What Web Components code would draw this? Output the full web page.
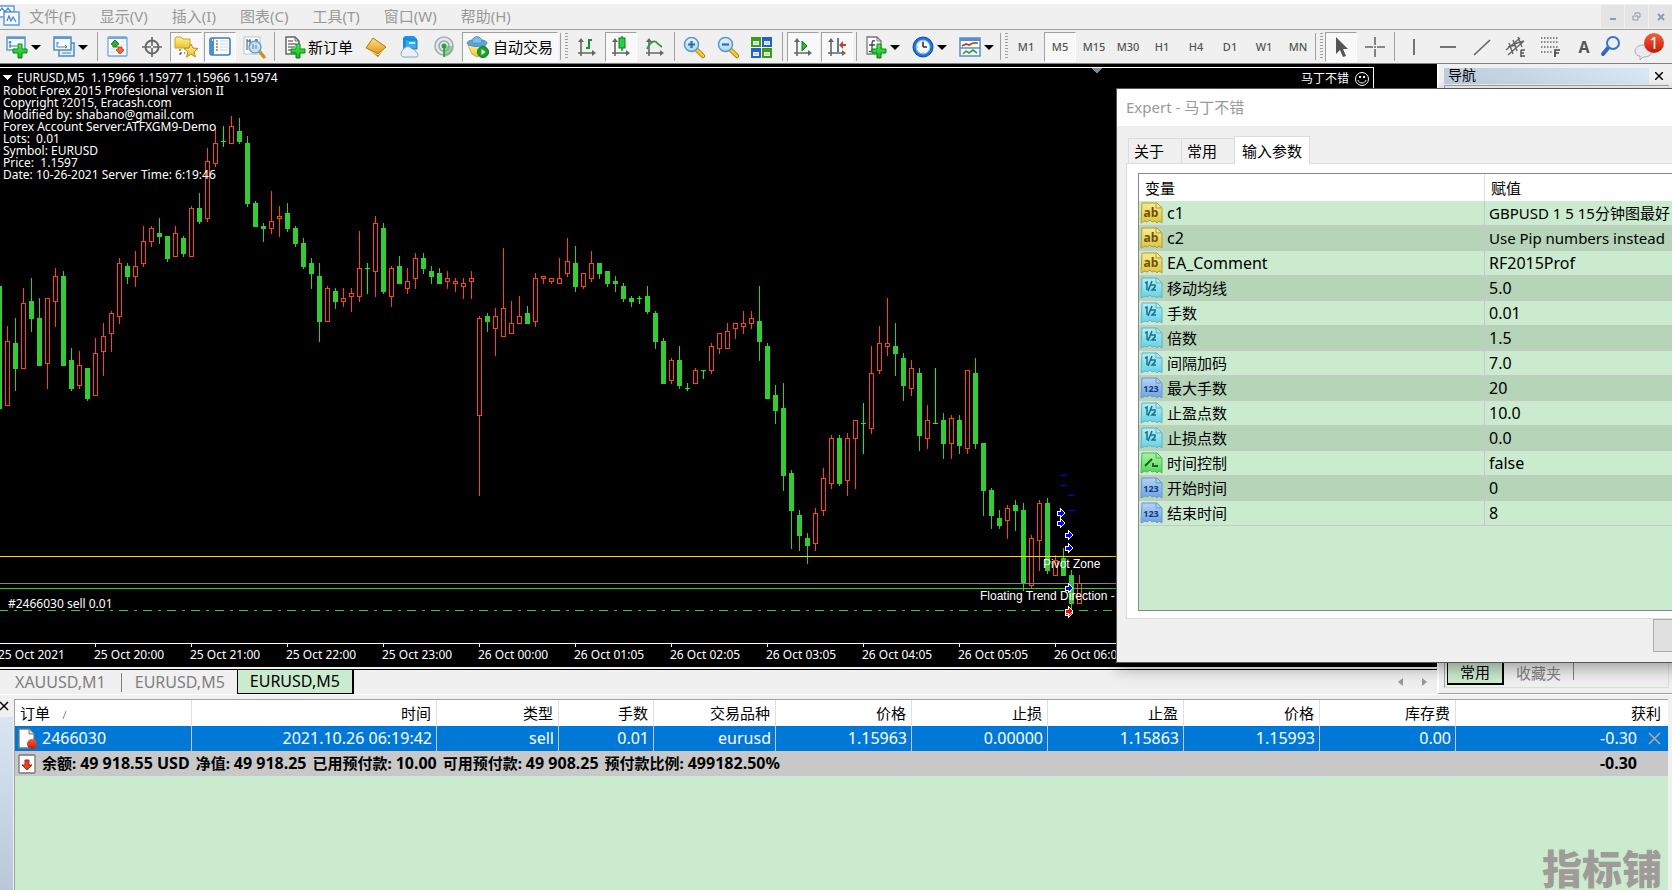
<!DOCTYPE html>
<html lang="zh-CN">
<head>
<meta charset="utf-8">
<title>EURUSD,M5</title>
<style>
html, body { margin: 0; height: 100%; overflow: hidden; }
body { background: #f0f0f0; color: #000; font: 15px/20px "Noto Sans", "Noto Sans CJK SC", sans-serif; }
</style>
</head>
<body>
<mt-terminal-app></mt-terminal-app>

<script>
const define = (name, html, setup) => {
  const template = document.createElement('template');
  template.innerHTML = html;
  customElements.define(name, class extends HTMLElement {
    constructor() {
      super();
      this.attachShadow({ mode: 'open' }).append(template.content.cloneNode(true));
    }
    connectedCallback() {
      if (setup && !this.ready) { this.ready = true; setup(this, this.shadowRoot); }
    }
  });
};

/* ---------- icons ---------- */
const AXES = '<path d="M5 4v16M2 17h16" stroke="#666" stroke-width="1.600" fill="none"/><path d="M2 6l3-4 3 4zM16 14l4 3-4 3z" fill="#666"/>';
const PLUS = '<path d="M12 8h4v5h5v4h-5v5h-4v-5h-5v-4h5z" fill="url(#green)" stroke="#078a12"/>';
const TAG = (fill, edge, text) => `<path d="M1 1h15l5 5v15l-3-2-2 2-2-2-3 1-2-2-3 2-2-1-4 2z" fill="url(#${fill})" stroke="${edge}"/><path d="M15 1v5h5" fill="none" stroke="${edge}"/>${text}`;
const tagText = (s, c, size) => `<text x="10" y="15" text-anchor="middle" font-family="Open Sans,sans-serif" font-weight="700" font-size="${size}" fill="${c}">${s}</text>`;
const LENS = (sign) => `<path d="M13 13l7 7" stroke="#b07a00" stroke-width="4.5" stroke-linecap="round"/><path d="M13 13l7 7" stroke="#f5cf3d" stroke-width="2.5" stroke-linecap="round"/><circle cx="8.500" cy="8.500" r="7" fill="url(#sky)" stroke="#5a96d0" stroke-width="1.500"/><path d="${sign}" stroke="#2d6ea8" stroke-width="2.200"/>`;
const ICONS = {
  logo: '<g fill="#fff" stroke="#5b9bea" stroke-width="1.500"><path d="M-4 2h18v11H-4z"/><path d="M4 8h15v13H4z"/></g><path d="M0 7l2-3 3 4 3-4 3 4M7 17l2-5 2 5 2-4 3 5" fill="none" stroke="#3f84dd" stroke-width="1.300"/>',
  newchart: '<rect x="1" y="1" width="18" height="13" fill="#f3f8fd" stroke="#5d9ad1" stroke-width="1.500"/><path d="M1 1h18v2H1z" fill="#5d9ad1"/><path d="M4 12V6M3 10h8M3 7l1-2 1 2" stroke="#3c79b5" fill="none"/>' + PLUS,
  profiles: '<rect x="6" y="7" width="15" height="13" fill="#e3effb" stroke="#4d8ac8" stroke-width="1.500"/><rect x="1" y="1" width="17" height="13" fill="#f5faff" stroke="#4d8ac8" stroke-width="1.500"/><path d="M1 1h17v2H1z" fill="#5d9ad1"/><path d="M4 6v5h10M4 7h2M12 9l2 2-2 1M9 17h9" stroke="#5681ab" fill="none"/>',
  market: '<rect x="1" y="1" width="19" height="19" rx="1" fill="#fff" stroke="#6aa9de" stroke-width="1.300"/><path d="M1 1h19v2H1z" fill="#6aa9de"/><path d="M14 6h4M14 9h4M3 13h5M3 16h5" stroke="#c6daf2"/><path d="M8 4l4 4-2 1v2H6V9L4 8z" fill="#30b030" stroke="#108010"/><path d="M13 18l-4-4 2-1v-2h4v2l2 1z" fill="#f4683c" stroke="#cf3d10"/>',
  target: '<circle cx="11" cy="11" r="6.500" fill="none" stroke="#666" stroke-width="2"/><path d="M11 1v9M11 12v9M1 11h9M12 11h9" stroke="#666" stroke-width="1.600"/>',
  favorites: '<path d="M0 3l1-2h5l2 2h7v9H0z" fill="url(#gold)" stroke="#c8a51a"/><path d="M5 13v8M5 17h5" stroke="#333" stroke-dasharray="2 2" fill="none"/><path d="M16 8l2 4 5 .5-4 3.500 1.500 5-4.500-3-4.500 3 1.500-5-4-3.500 5-.5z" fill="url(#gold)" stroke="#c18b10"/>',
  list: '<rect x="1" y="2" width="20" height="17" rx="2" fill="#fff" stroke="#3b7dbc" stroke-width="1.600"/><path d="M1 2h4v17H1z" fill="#4b90cd"/><path d="M11 5h8M11 8h8M11 11h8M11 14h8" stroke="#c3d6ea"/><path d="M3 4h1" stroke="#fff" stroke-width="2"/><path d="M7 5h2" stroke="#d33"/><path d="M7 8h2M7 11h2M7 14h2" stroke="#444"/>',
  tester: '<rect x="1" y="1" width="16" height="17" fill="#fff" stroke="#b5c4d1"/><path d="M4 3v11M7 3v7M13 3v5M4 5h4M12 4h3" stroke="#57789a" stroke-width="1.300"/><path d="M17 16l4 5" stroke="#c79618" stroke-width="3.500" stroke-linecap="round"/><circle cx="12" cy="11" r="6" fill="#bddcf6" fill-opacity=".85" stroke="#6f9ec9" stroke-width="1.500"/><path d="M10 8v5M13 9v4" stroke="#57789a"/>',
  neworder: '<path d="M2 1h9l4 4v13H2z" fill="#fff" stroke="#666" stroke-width="1.500"/><path d="M11 1v4h4" fill="none" stroke="#666"/><path d="M4 5h5M4 8h8M4 11h7M4 14h4" stroke="#777" stroke-width="1.300"/>' + PLUS,
  gold: '<path d="M1 12L9 3l12 8-8 10z" fill="#a96f08"/><path d="M1 12L8 2l13 9-8 7z" fill="url(#goldbar)" stroke="#b27a0a"/><path d="M1 13l12 6 8-7" stroke="#fff3c0" fill="none"/>',
  cloud: '<path d="M4 2l2-2h9l3 3v10H4z" fill="#1595ec"/><path d="M6 2l3 2h9v9H6z" fill="#35abf5" stroke="#0b7ace"/><path d="M10 6h6v2h-6z" fill="#c9ebff"/><path d="M4 21a4 4 0 010-7 5 5 0 019-1 4 4 0 014 3 3 3 0 011 5z" fill="#e9f0f8" stroke="#8aa2bd"/>',
  signal: '<circle cx="11" cy="10" r="9" fill="#e6eaea" stroke="#a7b0b5" stroke-width="1.700"/><circle cx="11" cy="10" r="5" fill="none" stroke="#94aeb8" stroke-width="1.700"/><path d="M11 10v11c6-1 9-5 9-11z" fill="#65b574" fill-opacity=".55"/><path d="M11 11v10" stroke="#1d9b2a" stroke-width="1.600"/><circle cx="11" cy="10" r="2.500" fill="#2aa336"/>',
  auto: '<path d="M1 9h18l-2 8-7 4-5-3z" fill="url(#gold)" stroke="#d4af2a"/><ellipse cx="10" cy="7" rx="10" ry="3.500" fill="#5ba6da" stroke="#4690c4"/><path d="M5 6c0-7 10-7 10 0 0 2-10 2-10 0" fill="#7cc0ea" stroke="#4690c4"/><circle cx="16" cy="16" r="5.500" fill="#18a42a" stroke="#0b7a18"/><path d="M14.500 13l4 3-4 3z" fill="#fff"/>',
  bars: AXES + '<path d="M13 3v10M13 4h3M10 12h3" stroke="#12912a" stroke-width="2"/>',
  candles: AXES + '<path d="M12 0v15" stroke="#12912a" stroke-width="1.500"/><rect x="9" y="2" width="6" height="10" fill="#28d04a" stroke="#0b7a18"/>',
  line: AXES + '<path d="M3 13c4-8 8-10 11-5l4 3" stroke="#2c9a3c" stroke-width="1.700" fill="none"/>',
  zoomin: LENS('M8.500 5v7M5 8.500h7'),
  zoomout: LENS('M5 8.500h7'),
  tiles: '<path d="M0 1h10v10H0zM11 12h10v10H11z" fill="#3a9d13"/><path d="M11 1h10v10H11zM0 12h10v10H0z" fill="#245fdb"/><path d="M2 5h6v4H2zM13 5h6v4h-6zM2 16h6v4H2zM13 16h6v4h-6z" fill="#f1f8ee"/><path d="M3 7h4M14 7h4M3 18h4M14 18h4" stroke="#89c0a0"/>',
  scroll: AXES + '<path d="M10 5l5 5-5 5z" fill="#20c238" stroke="#087c18"/>',
  shift: AXES + '<path d="M12 2v14" stroke="#2a6aa8" stroke-width="1.700"/><path d="M13 9l4-4v3h3v2h-3v3z" fill="#c8431c"/>',
  indicator: '<path d="M2 1h10l4 4v13H2z" fill="#fff" stroke="#777" stroke-width="1.300"/><path d="M12 1v4h4" fill="none" stroke="#777"/><path d="M10 5c-3-1-3 1-3 4v5c0 2-2 2-3 1M4 9h6" stroke="#444" fill="none" stroke-width="1.300"/>' + PLUS,
  clock: '<circle cx="11" cy="11" r="10" fill="#1b74da" stroke="#0c4ba4"/><circle cx="11" cy="11" r="7" fill="#f5f9ff" stroke="#7ab0ea"/><path d="M11 11V6M11 11h4" stroke="#333" stroke-width="1.600"/><path d="M11 5v1M11 16v1M5 11h1" stroke="#888"/>',
  template: '<rect x="1" y="2" width="20" height="18" fill="#fff" stroke="#5290cd" stroke-width="1.500"/><path d="M1 2h20v3H1z" fill="#5290cd"/><path d="M1 12h20" stroke="#5290cd" stroke-width="1.500"/><path d="M3 10l4-2 3 1 4-2 5 0" stroke="#b53a24" fill="none" stroke-width="1.700"/><path d="M4 18l3-3 3 2 4-3 4 3" stroke="#33a045" fill="none" stroke-width="1.700"/>',
  cursor: '<path d="M6 1v17l4-4 3 7 3-1-3-7h5z" fill="#555"/>',
  cross: '<path d="M11 1v8M11 13v8M1 11h8M13 11h8M10 11h2" stroke="#666" stroke-width="1.600"/>',
  vline: '<path d="M11 3v16" stroke="#555" stroke-width="1.600"/>',
  hline: '<path d="M3 11h16" stroke="#555" stroke-width="1.600"/>',
  trend: '<path d="M3 19L19 4" stroke="#666" stroke-width="1.700"/>',
  channel: '<path d="M1 14L15 2M3 19L19 5M4 7l4 11M8 4l4 11M13 1l4 10M3 11l8-2M9 8l10-3" stroke="#666" stroke-width="1.400"/><path d="M16 14h4M16 17h3M16 20h4M16 14v7" stroke="#555" stroke-width="1.500"/>',
  fibo: '<path d="M2 2h18M2 6h18M2 11h18M2 16h12" stroke="#666" stroke-width="1.500" stroke-dasharray="1.500 1.500"/><path d="M16 21v-7h5M16 17h4" stroke="#444" stroke-width="1.700" fill="none"/>',
  text: '<text x="11" y="17" text-anchor="middle" font-family="Open Sans,sans-serif" font-weight="700" font-size="16" fill="#555">A</text>',
  search: '<path d="M8 12l-5 6" stroke="#3268c4" stroke-width="4" stroke-linecap="round"/><circle cx="13" cy="7" r="6" fill="#e6f1fd" stroke="#3a72cf" stroke-width="2"/>',
  chat: '<path d="M-3 15c0-8 17-8 17 0 0 5-5 6-9 6l-3 3v-4c-3 0-5-2-5-5" fill="#e8eaee" stroke="#aab"/><circle cx="16" cy="7" r="10" fill="url(#red)"/><text x="16" y="13" text-anchor="middle" font-family="Noto Sans,sans-serif" font-size="16" fill="#fff">1</text>',
  ab: TAG('tagy', '#b79c2c', tagText('ab', '#6b5206', 12)),
  half: TAG('tagc', '#5cb5c6', '<path d="M4 6l2-1v8M11 4L7 14" stroke="#17728a" stroke-width="1.500" fill="none"/><path d="M10 8h4v2l-3 3h4" stroke="#17728a" stroke-width="1.500" fill="none"/>'),
  int: TAG('tagb', '#6a98ce', tagText('123', '#123c78', 9)),
  bool: TAG('tagg', '#4bb556', '<path d="M4 14l7-7M12 11v3h5" stroke="#11631b" stroke-width="1.800" fill="none"/>'),
  order: '<path d="M1 1h10l5 5v14H1z" fill="#fff" stroke="#777" stroke-width="1.300"/><path d="M11 1v5h5" fill="#ddd" stroke="#777"/><circle cx="14" cy="16" r="5" fill="url(#red)"/>',
  balance: '<rect x="1" y="2" width="16" height="18" rx="1" fill="#fff" stroke="#777" stroke-width="1.300"/><path d="M9 17l-5-5h3V7h4v5h3z" fill="#e8401c" stroke="#a82a0c"/>',
};
const grad = (id, a, b) => `<linearGradient id="${id}" x1="0" y1="0" x2="0" y2="1"><stop stop-color="${a}"/><stop offset="1" stop-color="${b}"/></linearGradient>`;
const DEFS = '<defs>' + grad('green', '#4df04d', '#0cb41c') + grad('gold', '#fff19a', '#eac22e') + grad('goldbar', '#ffe08a', '#d99a18') +
  grad('sky', '#e9f6ff', '#a7d6f7') + grad('red', '#f2603c', '#c81808') + grad('tagy', '#f8eb96', '#ddc442') +
  grad('tagc', '#b6f0f8', '#66cfe4') + grad('tagb', '#b4d2f8', '#6ba3e6') + grad('tagg', '#a5f5a0', '#54d45c') + '</defs>';

define('mt-icon', `<style>:host{display:block;flex:none;width:22px;height:22px}svg{display:block;overflow:visible}</style>`,
  (el, root) => root.append(document.createRange().createContextualFragment(
    `<svg width="22" height="22" viewBox="0 0 22 22" aria-hidden="true">${DEFS}${ICONS[el.getAttribute('name')]}</svg>`)));

/* ---------- menu bar ---------- */
define('mt-menubar', `<style>
:host{display:flex;height:25px;border-top:4px solid #fff;border-bottom:1px solid #a0a0a0;background:#f0f0f0;color:#999}
nav{display:flex;flex:1}
nav button{font:inherit;color:inherit;border:0;background:none;padding:0 12px 2px}
.win{display:flex;gap:1px;padding-top:1px}
.win button{width:23px;height:23px;padding:0;border:0;background:#e4e4e4;display:grid;place-items:center}
mt-icon{width:17px}
</style>
<mt-icon name="logo"></mt-icon>
<nav aria-label="菜单"><button>文件(F)</button><button>显示(V)</button><button>插入(I)</button><button>图表(C)</button><button>工具(T)</button><button>窗口(W)</button><button>帮助(H)</button></nav>
<div class="win">
<button aria-label="最小化"><svg width="9" height="9"><path d="M2 7h6" stroke="#8b9cad" stroke-width="2"/></svg></button>
<button aria-label="还原"><svg width="9" height="9"><path d="M3 3V1h5v4H6M1 4h5v4H1z" fill="none" stroke="#8b9cad"/></svg></button>
<button aria-label="关闭"><svg width="9" height="9"><path d="M2 2l6 6M8 2L2 8" stroke="#8b9cad" stroke-width="2"/></svg></button>
</div>`);

/* ---------- tool bar ---------- */
define('mt-tool', `<style>
:host{display:block;flex:none;width:34px}
:host([menu]){width:47px}
:host([wide]){width:auto}
button{display:flex;align-items:center;justify-content:center;box-sizing:border-box;width:32px;height:30px;margin:2px 1px 1px;padding:0;border:1px solid transparent;background:none;font:inherit;color:inherit}
:host([menu]) button{width:45px;justify-content:flex-start;padding-left:4px;gap:3px}
:host([wide]) button{width:auto;padding:0 4px;gap:2px}
:host([wide][pressed]) button{gap:4px}
:host([pressed]) button{background:#f8f8f8;border-color:#a0a0a0 #fff #fff #a0a0a0}
i{display:none;border:5px solid transparent;border-top-color:#000;border-bottom:0}
:host([menu]) i{display:block}
</style><button><slot></slot><i></i></button>`, (el, root) => {
  const b = root.querySelector('button'), icon = el.getAttribute('icon');
  if (icon) { const g = document.createElement('mt-icon'); g.setAttribute('name', icon); b.prepend(g); }
  if (el.title) b.setAttribute('aria-label', el.title);
  if (el.hasAttribute('pressed')) b.setAttribute('aria-pressed', 'true');
});
define('mt-rule', `<style>:host{display:block;flex:none;width:1px;height:29px;margin:2px 3px 0;background:#a0a0a0}:host([tight]){margin:2px 2px 0}</style>`);
define('mt-grip', `<style>:host{display:block;flex:none;width:3px;height:27px;margin:3px 1px 0 0;padding-left:4px;border-left:1px solid #a0a0a0;background:repeating-linear-gradient(#a0a0a0 0 1px,transparent 1px 3px) content-box}:host([loose]){margin:3px 2px 0 1px}</style>`);
define('mt-toolbar', `<style>
:host{display:flex;height:33px;border-bottom:1px solid #808080;background:#f0f0f0}
.tf{display:contents;font-size:11px;font-weight:500;color:#555}
.end{margin-left:-7px}
.chat{margin-left:4px}
</style>
<mt-tool icon="newchart" menu title="新图表"></mt-tool><mt-tool icon="profiles" menu title="配置"></mt-tool><mt-rule></mt-rule>
<mt-tool icon="market" title="市场报价"></mt-tool><mt-tool icon="target" title="数据窗口"></mt-tool><mt-tool icon="favorites" pressed title="导航"></mt-tool><mt-tool icon="list" pressed title="终端"></mt-tool><mt-tool icon="tester" title="策略测试"></mt-tool><mt-rule></mt-rule>
<mt-tool icon="neworder" wide>新订单</mt-tool><mt-tool icon="gold" title="编辑器"></mt-tool><mt-tool icon="cloud" title="云端"></mt-tool><mt-tool icon="signal" title="信号"></mt-tool><mt-tool icon="auto" wide pressed>自动交易</mt-tool>
<mt-grip loose></mt-grip>
<mt-tool icon="bars" title="柱状图"></mt-tool><mt-tool icon="candles" pressed title="蜡烛图"></mt-tool><mt-tool icon="line" title="折线图"></mt-tool><mt-rule tight></mt-rule>
<mt-tool icon="zoomin" title="放大"></mt-tool><mt-tool icon="zoomout" title="缩小"></mt-tool><mt-tool icon="tiles" title="平铺"></mt-tool><mt-rule></mt-rule>
<mt-tool icon="scroll" pressed title="自动滚动"></mt-tool><mt-tool icon="shift" pressed title="图表平移"></mt-tool><mt-rule tight></mt-rule>
<mt-tool icon="indicator" menu title="指标"></mt-tool><mt-tool icon="clock" menu title="周期"></mt-tool><mt-tool icon="template" menu title="模板"></mt-tool>
<mt-grip></mt-grip>
<div class="tf"><mt-tool>M1</mt-tool><mt-tool pressed>M5</mt-tool><mt-tool>M15</mt-tool><mt-tool>M30</mt-tool><mt-tool>H1</mt-tool><mt-tool>H4</mt-tool><mt-tool>D1</mt-tool><mt-tool>W1</mt-tool><mt-tool>MN</mt-tool></div>
<mt-grip></mt-grip>
<mt-tool icon="cursor" pressed title="光标"></mt-tool><mt-tool icon="cross" title="十字线"></mt-tool><mt-rule tight></mt-rule>
<mt-tool icon="vline" title="垂直线"></mt-tool><mt-tool icon="hline" title="水平线"></mt-tool><mt-tool icon="trend" title="趋势线"></mt-tool><mt-tool icon="channel" title="通道"></mt-tool><mt-tool icon="fibo" title="斐波那契"></mt-tool><mt-tool icon="text" title="文本"></mt-tool><mt-tool class="end" icon="search" title="搜索"></mt-tool><mt-tool class="chat" icon="chat" title="消息"></mt-tool>`);

/* ---------- chart ---------- */
/* Bars: kind, high, body top, body bottom, low. Three units per pixel, counted from the block's own base line.
   u = rising, d = falling, e = open equals close. */
const BARS = [
 [180, `d318,318,687,687 u438,483,678,678 d414,489,567,633 u324,369,567,567 d294,363,417,456 d354,414,558,558 u354,354,552,627 u264,288,366,441 d273,288,558,558 d504,540,627,633 u513,555,618,627 d564,564,657,663 u474,519,648,648 u429,468,516,588 u393,399,462,516 u234,249,411,432 d249,258,291,312 u213,258,291,321 u138,183,252,261 u138,144,186,201 d114,159,171,192 d168,168,237,246 u138,159,231,231 d168,174,222,231 u78,84,231,231 d39,84,126,132 u-96,-57,117,126 u-156,-111,-48,-39 e-162,-117,-117,-99 u-192,-162,-108,-108 d-186,-147,-114,-108 d-132,-111,72,81 d63,69,141,141 d129,138,147,186 u33,123,147,162 u78,108,117,171 d69,99,147,156 d138,144,192,201 d174,189,261,267 d234,249,282,327 d249,288,426,486 u318,324,426,426 d324,333,366,387 u324,354,366,381 u324,339,351,396 u153,264,351,366 e249,264,264,342 u108,129,276,351 d129,144,336,342 u258,264,351,381 d228,258,312,312 u264,303,327,342 u219,234,297,327 d219,234,267,282 d258,273,291,312 d264,279,312,312 u273,294,306,327 u294,303,312,336 u294,309,321,357 u273,294,306,357`],
 [220, `u288,294,588,828 d279,288,306,336 u264,288,327,408 u84,264,351,351 u243,309,342,342 u228,288,312,312 d258,279,312,312 u159,174,306,321 u168,168,177,192 u174,174,186,192 u114,174,192,192 u54,123,162,171 d78,129,201,216 u159,159,201,207 u93,129,177,186 d129,129,162,177 d153,153,192,201 d168,183,192,216 d189,198,237,246 d228,234,246,261 e228,234,234,252 d198,228,276,282 d273,279,366,387 d354,363,492,492 u414,420,483,492 d378,420,498,507 e489,504,504,513 u444,450,492,492 e450,450,450,477 u369,378,453,462 u339,339,387,402 u309,333,387,387 u309,309,327,357 u273,309,321,342 u273,294,312,327 d198,303,366,423 d369,378,537,537 d495,525,573,612 d489,564,768,813 d750,759,873,987 d870,885,948,993 d939,954,978,1032 u864,879,972,993 u744,774,873,888 u645,654,792,807 d645,654,792,798 u639,654,783,828 u600,600,657,807 e549,609,609,702 u378,459,627,642 u318,369,453,462 u234,369,381,408`],
 [280, `d129,198,222,288 d219,234,318,363 u240,264,327,348 d264,279,468,513 u375,420,477,507 e264,429,429,432 d399,420,492,537 u405,414,492,537 d405,420,498,522 u270,270,507,522 d234,279,492,507 d489,489,633,708 d624,630,708,747 d690,714,738,747 u675,684,723,777 d660,675,693,753 d669,690,912,933 u765,774,918,924 u660,669,783,873 d654,669,873,882 u825,840,888,888 d804,834,888,888 d870,885,972,996 u885,909,972,972`],
];
const TOP = 64;
function drawBars() {
  let x = -1, out = '';
  const box = (x, y, w, h, c) => `<path d="M${x} ${y}h${w}v${h}h${-w}z" fill="${c}"/>`;
  for (const [base, rows] of BARS) for (const row of rows.split(' ')) {
    const [hi, a, b, lo] = row.slice(1).split(',').map(v => base - TOP + v / 3);
    const c = { u: '#ff4500', d: '#32cd32', e: '#00ff00' }[row[0]];
    out += box(x, hi, 1, lo - hi, c) + box(x - 2, a, 5, Math.max(1, b - a), c);
    if (row[0] === 'u') out += box(x - 1, a + 1, 3, b - a - 2, '#000');
    x += 8;
  }
  return out;
}
const ARROW = (x, y, c) => `<path d="M${x - 3} ${y - 2}h3v-3l5 5-5 5v-3h-3z" fill="${c}" stroke="#fff"/>`;
define('mt-chart', `<style>
:host{display:block;position:relative;overflow:hidden;background:#000;color:#fff;font-size:12px;line-height:12px}
svg{display:block}
.info{position:absolute;left:3px;top:7px}
.info h1{font:inherit;line-height:14px;margin:0 0 0 14px;white-space:pre}
.info p{margin:0;white-space:pre}
.ea{position:absolute;left:1301px;top:7px;line-height:16px;display:flex;gap:5px}
.note{position:absolute;font-family:"Liberation Sans",sans-serif;white-space:nowrap}
.tick{position:absolute;left:8px;top:534px}
ol{display:flex;margin:0 0 0 -1px;padding:0;list-style:none;height:23px;border-top:1px solid #fff;overflow:hidden}
li{flex:none;width:96px;line-height:21px;text-indent:-1px;white-space:nowrap;background:linear-gradient(#fff,#fff) 0 0/1px 3px no-repeat}
</style>
<svg class="plot" width="100%" height="579" shape-rendering="crispEdges" role="img" aria-label="EURUSD"></svg>
<ol><li>25 Oct 2021<li>25 Oct 20:00<li>25 Oct 21:00<li>25 Oct 22:00<li>25 Oct 23:00<li>26 Oct 00:00<li>26 Oct 01:05<li>26 Oct 02:05<li>26 Oct 03:05<li>26 Oct 04:05<li>26 Oct 05:05<li>26 Oct 06:05</ol>
<div class="info"><h1>EURUSD,M5  1.15966 1.15977 1.15966 1.15974</h1><p>Robot Forex 2015 Profesional version II
Copyright ?2015, Eracash.com
Modified by: shabano@gmail.com
Forex Account Server:ATFXGM9-Demo
Lots:  0.01
Symbol: EURUSD
Price:  1.1597
Date: 10-26-2021 Server Time: 6:19:46</p></div>
<div class="ea">马丁不错<svg width="16" height="16"><g fill="none" stroke="#fff"><circle cx="8" cy="8" r="6.500"/><path d="M4 9c1 4 7 4 8 0"/></g><path d="M5 5h2v2H5zM9 5h2v2H9z" fill="#fff"/></svg></div>
<div class="note" style="left:1043px;top:494px">Pivot Zone</div>
<div class="note" style="left:980px;top:526px">Floating Trend Direction -</div>
<div class="tick">#2466030 sell 0.01</div>`, (el, root) => {
  const marks = [[1060, 449], [1060, 459], [1068, 471], [1068, 484], [1068, 524]].map(p => ARROW(p[0], p[1], '#00f')).join('');
  root.querySelector('.plot').innerHTML =
    `<path d="M0 3h1374v1H0z" fill="#fff"/><path d="M1373 3h1v600h-1z" fill="#fff"/>
     <path d="M2 11h10l-5 5z" fill="#fff"/><path d="M1091 4h11l-5 6z" fill="#778899"/>` + drawBars() +
    `<rect y="492" width="100%" height="1" fill="#ffd700"/><rect y="519" width="100%" height="1" fill="#778899"/><rect y="524" width="100%" height="1" fill="#32cd32"/>
     <path d="M-1 546.500H1437" stroke="#32cd32" stroke-dasharray="9 6 3 6"/>
     <path d="M1060 411h7v1h-7zM1060 421h7v1h-7zM1068 431h7v1h-7zM1068 446h7v1h-7z" fill="#00f"/>` +
    marks + ARROW(1068, 549, '#f00') + ARROW(1068, 547, '#f00');
});

/* ---------- tab strips ---------- */
define('mt-chart-tabs', `<style>
:host{display:flex;height:24px;margin-top:2px;border-top:1px solid #000;background:#f0f0f0;color:#808080}
button{font:inherit;font-size:16px;line-height:21px;color:inherit;background:none;border:0;padding:0 12px 0 13px}
.first{padding:0 16px 0 15px;background:linear-gradient(#808080,#808080) 100% 3px/1px 19px no-repeat}
.on{color:#000;background:#cbebcf;border:solid #000;border-width:0 2px 1px 1px;padding:0 12px}
.arrows{margin-left:auto;display:flex;gap:6px;padding-right:4px}
.arrows button{padding:0;width:18px}
.arrows svg{display:block;margin:5px auto}
</style>
<button class="first">XAUUSD,M1</button><button>EURUSD,M5</button><button class="on" aria-current="true">EURUSD,M5</button>
<div class="arrows"><button aria-label="向左"><svg width="5" height="10"><path d="M5 1v8L0 5z" fill="#999"/></svg></button><button aria-label="向右"><svg width="5" height="10"><path d="M0 1v8l5-4z" fill="#999"/></svg></button></div>`);

/* ---------- navigator ---------- */
define('mt-navigator', `<style>
:host{display:flex;flex-direction:column;box-sizing:border-box;padding:4px 3px 5px 5px;border-left:2px solid #fff;border-bottom:1px solid #a0a0a0;background:#f0f0f0}
header{display:flex;height:16px;margin-bottom:1px}
h2{flex:1;margin:0;padding-left:4px;font-size:14px;font-weight:400;line-height:14px;background:linear-gradient(90deg,#bccddd,#d8e7f5)}
header button{width:20px;padding:0;border:0;background:none}
svg{display:block;margin:auto}
.body{flex:1;border:1px solid #c9e9cc;border-left-color:#a0a0a0;border-top-color:#a0a0a0;display:flex;flex-direction:column;justify-content:flex-end}
.tabs{display:flex;padding:0 0 2px 2px;height:24px}
.tabs button{font:inherit;line-height:22px;padding:0 12px;border:0;background:none;color:#808080}
.tabs .on{border:1px solid #000;border-width:0 2px 2px 1px;background:#cbebcf;color:#000}
.tabs i{width:1px;height:19px;background:#808080}
</style>
<header><h2>导航</h2><button aria-label="关闭"><svg width="8" height="8"><path d="M0 0l8 8M8 0L0 8" stroke="#000" stroke-width="1.500"/></svg></button></header>
<div class="body"><div class="tabs"><button class="on">常用</button><button>收藏夹</button><i></i></div></div>`);

/* ---------- terminal ---------- */
define('mt-terminal', `<style>
:host{display:flex;min-height:0;border-top:1px solid #fff;padding:4px 4px 0 0;position:relative;background:#f0f0f0}
aside{flex:none;width:13px;margin-right:1px;display:flex;flex-direction:column}
aside button{height:18px;padding:0 0 4px;border:0;background:none}
aside button svg{display:block}
aside i{flex:1;background:linear-gradient(#d8e6f4,#b9c7d8)}
.pane{flex:1;min-width:0;border:solid #a0a0a0;border-width:1px 0 0 1px;background:#cbebcf;overflow:hidden}
table{width:100%;table-layout:fixed;border-collapse:separate;border-spacing:0}
th,td{padding:0 4px 0 0;text-align:right;white-space:nowrap;border-right:1px solid #e0e0e0}
th{height:26px;padding-right:5px;background:#fff;font-weight:400}
td{height:25px;line-height:25px;background:#0078d7;color:#fff;border-color:#c8c8c8;font-size:16px}
th:first-child{text-align:left;padding-left:5px}
th:last-child{padding-right:7px}
th:last-child,td:last-child{border-right:0}
.cell{display:flex;align-items:center;gap:2px;height:25px;padding-left:3px}
.pl{padding-right:31px;position:relative}
.pl button{position:absolute;right:7px;top:6px;width:13px;height:13px;padding:0;border:0;background:none}
.pl svg{display:block}
.sum td{background:#c8c8c8;color:#000;font-weight:700;border:0}
.facts{display:flex;gap:6px;font-size:15px}
.facts b{font-size:16px;font-weight:700}
.mark{position:absolute;right:10px;bottom:0;font:900 40px/58px "Noto Sans CJK SC",sans-serif;margin-bottom:-6px;color:#a09a98}
th svg{margin-left:12px}
</style>
<aside><button aria-label="关闭"><svg width="9" height="12"><path d="M0 2l8 8M8 2L0 10" stroke="#000" stroke-width="1.500"/></svg></button><i></i></aside>
<div class="pane"><table>
<colgroup><col style="width:177px"><col style="width:245px"><col style="width:122px"><col style="width:95px"><col style="width:122px"><col style="width:136px"><col style="width:136px"><col style="width:136px"><col style="width:136px"><col style="width:136px"><col></colgroup>
<thead><tr><th>订单<svg width="5" height="8"><path d="M1 8l3-8" stroke="#888"/></svg></th><th>时间</th><th>类型</th><th>手数</th><th>交易品种</th><th>价格</th><th>止损</th><th>止盈</th><th>价格</th><th>库存费</th><th>获利</th></tr></thead>
<tbody><tr><td><div class="cell"><mt-icon name="order"></mt-icon>2466030</div></td><td>2021.10.26 06:19:42</td><td>sell</td><td>0.01</td><td>eurusd</td><td>1.15963</td><td>0.00000</td><td>1.15863</td><td>1.15993</td><td>0.00</td><td class="pl">-0.30<button aria-label="平仓"><svg width="13" height="13"><path d="M1 1l11 11M12 1L1 12" stroke="#aaa" stroke-width="1.700"/></svg></button></td></tr>
<tr class="sum"><td colspan="10"><div class="cell"><mt-icon name="balance"></mt-icon><div class="facts"><span>余额: <b>49 918.55 USD</b></span><span>净值: <b>49 918.25</b></span><span>已用预付款: <b>10.00</b></span><span>可用预付款: <b>49 908.25</b></span><span>预付款比例: <b>499182.50%</b></span></div></div></td><td class="pl">-0.30</td></tr></tbody>
</table></div>
<div class="mark">指标铺</div>`);

/* ---------- expert dialog ---------- */
const PARAMS = [['ab', 'c1', 'GBPUSD 1 5 15分钟图最好'], ['ab', 'c2', 'Use Pip numbers instead'], ['ab', 'EA_Comment', 'RF2015Prof'],
  ['half', '移动均线', '5.0'], ['half', '手数', '0.01'], ['half', '倍数', '1.5'], ['half', '间隔加码', '7.0'], ['int', '最大手数', '20'],
  ['half', '止盈点数', '10.0'], ['half', '止损点数', '0.0'], ['bool', '时间控制', 'false'], ['int', '开始时间', '0'], ['int', '结束时间', '8']];
define('mt-expert-dialog', `<style>
:host{display:flex;flex-direction:column;box-sizing:border-box;width:760px;height:573px;background:#f0f0f0;box-shadow:0 0 0 1px #555,0 6px 16px rgba(0,0,0,.35)}
h2{margin:0;height:37px;padding-left:9px;background:#fff;color:#999;font-size:15px;font-weight:400;line-height:37px}
.tabs{display:flex;align-items:flex-end;height:28px;margin:10px 0 -1px 11px;position:relative}
.tabs button{font:inherit;line-height:24px;height:26px;padding:0 17px 0 5px;border:1px solid #dcdcdc;border-right:0;background:#f0f0f0}
.tabs .on{height:28px;padding:0 7px;border:1px solid #dcdcdc;border-bottom:0;background:#fff}
.pane{flex:1;display:flex;margin:0 12px 0 9px;padding:9px 11px 7px;border:1px solid #dcdcdc;background:#fff}
.grid{flex:1;border:1px solid #828790;background:#cbebcf}
table{width:100%;table-layout:fixed;border-collapse:separate;border-spacing:0}
th{height:27px;padding:0 0 0 6px;background:#fff;text-align:left;font-weight:400}
th:first-child{border-right:1px solid #e0e0e0}
td{height:24px;padding:0 0 0 4px;line-height:24px;white-space:nowrap;border-bottom:1px solid #c8c8c8}
td:first-child{border-right:1px solid #c8c8c8;padding-left:2px}
tr:nth-child(even) td{background:#b5d4b8}
.cell{display:flex;align-items:center;gap:4px;height:24px}
.latin{font-size:16px}
footer{display:flex;justify-content:flex-end;height:43px}
footer button{width:120px;height:33px;margin-right:104px;border:1px solid #adadad;background:#e1e1e1}
</style>
<h2>Expert - 马丁不错</h2>
<div class="tabs" role="tablist"><button role="tab">关于</button><button role="tab">常用</button><button role="tab" class="on" aria-selected="true">输入参数</button></div>
<div class="pane"><div class="grid"><table><colgroup><col style="width:346px"><col></colgroup><thead><tr><th>变量</th><th>赋值</th></tr></thead><tbody></tbody></table></div></div>
<footer><button aria-label="确定"></button></footer>`, (el, root) => {
  const cell = s => /^[\w.]+$/.test(s) ? `<span class="latin">${s}</span>` : `<span>${s}</span>`;
  root.querySelector('tbody').innerHTML = PARAMS.map(([i, n, v]) =>
    `<tr><td><div class="cell"><mt-icon name="${i}"></mt-icon>${cell(n)}</div></td><td>${cell(v)}</td></tr>`).join('');
});

/* ---------- page ---------- */
define('mt-terminal-app', `<style>
:host{display:flex;flex-direction:column;position:relative;height:100vh;min-height:720px;overflow:hidden;background:#f0f0f0}
main{display:grid;grid-template-columns:minmax(0,1fr) 235px}
mt-terminal{flex:1}
mt-expert-dialog{position:absolute;left:1117px;top:89px}
</style>
<mt-menubar></mt-menubar><mt-toolbar></mt-toolbar>
<main><div><mt-chart></mt-chart><mt-chart-tabs></mt-chart-tabs></div><mt-navigator></mt-navigator></main>
<mt-terminal></mt-terminal>
<mt-expert-dialog role="dialog" aria-label="Expert"></mt-expert-dialog>`);
</script>
</body>
</html>
